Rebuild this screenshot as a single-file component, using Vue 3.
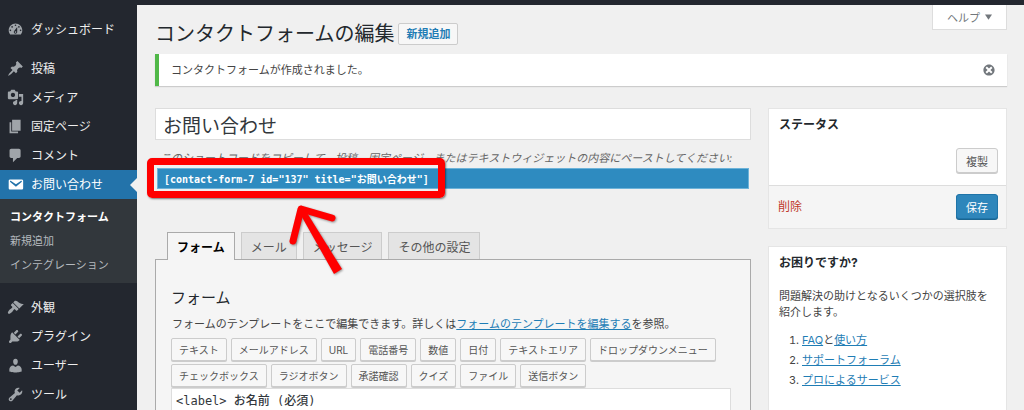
<script setup>
import { ref } from 'vue'

const icons = {
  dashboard: 'M3.76 16h12.48c1.1-1.37 1.76-3.11 1.76-5 0-4.42-3.58-8-8-8s-8 3.58-8 8c0 1.89.66 3.63 1.76 5zM10 4c.55 0 1 .45 1 1s-.45 1-1 1-1-.45-1-1 .45-1 1-1zM6 6c.55 0 1 .45 1 1s-.45 1-1 1-1-.45-1-1 .45-1 1-1zm8 0c.55 0 1 .45 1 1s-.45 1-1 1-1-.45-1-1 .45-1 1-1zm-5.37 5.55L12 7v6c0 1.1-.9 2-2 2s-2-.9-2-2c0-.57.24-1.08.63-1.45zM4 10c.55 0 1 .45 1 1s-.45 1-1 1-1-.45-1-1 .45-1 1-1zm12 0c.55 0 1 .45 1 1s-.45 1-1 1-1-.45-1-1 .45-1 1-1zm-5 3c0-.55-.45-1-1-1s-1 .45-1 1 .45 1 1 1 1-.45 1-1z',
  pin: 'M10.44 3.02l1.82-1.82 6.36 6.35-1.83 1.82c-1.05-.68-2.48-.57-3.41.36l-.75.75c-.92.93-1.04 2.35-.35 3.41l-1.83 1.82-2.41-2.41-2.8 2.79c-.42.42-3.38 2.71-3.8 2.29s1.86-3.39 2.28-3.81l2.79-2.79L4.1 9.36l1.83-1.82c1.05.69 2.48.57 3.4-.36l.75-.75c.93-.92 1.05-2.35.36-3.41z',
  media: 'M13 11V4c0-.55-.45-1-1-1h-1.67L9 1H5L3.67 3H2c-.55 0-1 .45-1 1v7c0 .55.45 1 1 1h10c.55 0 1-.45 1-1zM7 4.5c1.38 0 2.5 1.12 2.5 2.5S8.38 9.5 7 9.5 4.5 8.38 4.5 7 5.62 4.5 7 4.5zM14 6h5v10.5c0 1.38-1.12 2.5-2.5 2.5S14 17.88 14 16.5s1.12-2.5 2.5-2.5c.17 0 .34.02.5.05V9h-3V6zm-4 8.05V13h2v3.5c0 1.38-1.12 2.5-2.5 2.5S7 17.88 7 16.5 8.12 14 9.5 14c.17 0 .34.02.5.05z',
  page: 'M6 15V2h10v13H6zm-1 1h8v2H3V5h2v11z',
  comment: 'M5 2h9c1.1 0 2 .9 2 2v7c0 1.1-.9 2-2 2h-2l-5 5v-5H5c-1.1 0-2-.9-2-2V4c0-1.1.9-2 2-2z',
  mail: 'M3.87 4h13.25C18.37 4 19 4.59 19 5.79v8.42c0 1.19-.63 1.79-1.88 1.79H3.87c-1.25 0-1.88-.6-1.88-1.79V5.79c0-1.2.63-1.79 1.88-1.79zm6.62 8.6l6.74-5.53c.24-.2.43-.66.13-1.07-.29-.41-.82-.42-1.17-.17l-5.7 3.86L4.8 5.83c-.35-.25-.88-.24-1.17.17-.3.41-.11.87.13 1.07z',
  brush: 'M14.48 11.06L7.41 3.99l1.5-1.5c.5-.56 2.3-.47 3.51.32 1.21.8 1.43 1.28 2.91 2.1 1.18.64 2.45 1.26 4.45.85zm-.71.71L6.7 4.7 4.93 6.47c-.39.39-.39 1.02 0 1.41l1.06 1.06c.39.39.39 1.03 0 1.42-.6.6-1.43 1.11-2.21 1.69-.35.26-.7.53-1.01.84C1.43 14.23.4 16.08 1.4 17.07c.99 1 2.84-.03 4.18-1.36.31-.31.58-.66.85-1.02.57-.78 1.08-1.61 1.69-2.21.39-.39 1.02-.39 1.41 0l1.06 1.06c.39.39 1.02.39 1.41 0z',
  plug: 'M13.11 4.36L9.87 7.6 8 5.73l3.24-3.24c.35-.34 1.05-.2 1.56.32.52.51.66 1.21.31 1.55zm-8 1.77l.91-1.12 9.01 9.01-1.19.84c-.71.71-2.63 1.16-3.82 1.16H6.14L4.9 17.26c-.59.59-1.54.59-2.12 0-.59-.58-.59-1.53 0-2.12l1.24-1.24v-3.88c0-1.13.4-3.19 1.09-3.89zm7.26 3.97l3.24-3.24c.34-.35 1.04-.21 1.55.31.52.51.66 1.21.31 1.55l-3.24 3.25z',
  user: 'M10 9.25c-2.27 0-2.73-3.44-2.73-3.44C7 4.02 7.82 2 9.97 2c2.16 0 2.98 2.02 2.71 3.81 0 0-.41 3.44-2.68 3.44zm0 2.57L12.72 10c2.39 0 4.52 2.33 4.52 4.53v2.49s-3.65 1.13-7.24 1.13c-3.65 0-7.24-1.13-7.24-1.13v-2.49c0-2.25 1.94-4.48 4.47-4.48z',
  wrench: 'M16.68 9.77c-1.34 1.34-3.3 1.67-4.95.99l-5.41 6.52c-.99.99-2.59.99-3.58 0s-.99-2.59 0-3.57l6.52-5.42c-.68-1.65-.35-3.61.99-4.95 1.28-1.28 3.12-1.62 4.72-1.06l-2.89 2.89 2.82 2.82 2.86-2.87c.53 1.58.18 3.39-1.08 4.65zM3.81 16.21c.4.39 1.04.39 1.43 0 .4-.4.4-1.04 0-1.43-.39-.4-1.03-.4-1.43 0-.39.39-.39 1.03 0 1.43z',
}

const menu = [
  [{ label: 'ダッシュボード', icon: 'dashboard' }],
  [
    { label: '投稿', icon: 'pin' },
    { label: 'メディア', icon: 'media' },
    { label: '固定ページ', icon: 'page' },
    { label: 'コメント', icon: 'comment' },
    {
      label: 'お問い合わせ',
      icon: 'mail',
      current: true,
      children: ['コンタクトフォーム', '新規追加', 'インテグレーション'],
    },
  ],
  [
    { label: '外観', icon: 'brush' },
    { label: 'プラグイン', icon: 'plug' },
    { label: 'ユーザー', icon: 'user' },
    { label: 'ツール', icon: 'wrench' },
  ],
]

const tabs = ['フォーム', 'メール', 'メッセージ', 'その他の設定']
const activeTab = ref('フォーム')

const tagRows = [
  ['テキスト', 'メールアドレス', 'URL', '電話番号', '数値', '日付', 'テキストエリア', 'ドロップダウンメニュー'],
  ['チェックボックス', 'ラジオボタン', '承諾確認', 'クイズ', 'ファイル', '送信ボタン'],
]

const title = ref('お問い合わせ')
const shortcode = '[contact-form-7 id="137" title="お問い合わせ"]'
const template = ref('<label> お名前 (必須)\n    [text* your-name] </label>')
const noticeVisible = ref(true)
</script>

<template>
  <div class="admin">
    <div class="topbar"></div>
    <div class="body">
      <nav class="sidebar">
        <ul v-for="(group, g) in menu" :key="g" class="group">
          <li v-for="item in group" :key="item.label">
            <a href="#" class="item" :class="{ current: item.current }">
              <svg class="icon" viewBox="0 0 20 20" aria-hidden="true"><path :d="icons[item.icon]" /></svg>
              <span>{{ item.label }}</span>
            </a>
            <ul v-if="item.children" class="submenu">
              <li v-for="(child, c) in item.children" :key="child">
                <a href="#" :class="{ selected: c === 0 }">{{ child }}</a>
              </li>
            </ul>
          </li>
        </ul>
      </nav>

      <main class="content">
        <header class="head">
          <div class="heading">
            <h1>コンタクトフォームの編集</h1>
            <a href="#" class="add-new">新規追加</a>
          </div>
          <button type="button" class="help">
            ヘルプ
            <svg viewBox="0 0 8 6" aria-hidden="true"><path d="M0 0h8L4 6z" /></svg>
          </button>
        </header>

        <div v-if="noticeVisible" class="notice">
          <p>コンタクトフォームが作成されました。</p>
          <button type="button" class="dismiss" aria-label="通知を非表示" @click="noticeVisible = false">
            <svg viewBox="0 0 20 20" aria-hidden="true">
              <path d="M10 2c4.42 0 8 3.58 8 8s-3.58 8-8 8-8-3.58-8-8 3.58-8 8-8zm5 11l-3-3 3-3-2-2-3 3-3-3-2 2 3 3-3 3 2 2 3-3 3 3z" />
            </svg>
          </button>
        </div>

        <div class="columns">
          <section class="editor">
            <input v-model="title" class="title" type="text" aria-label="タイトル" />

            <div class="shortcode">
              <label for="shortcode">このショートコードをコピーして、投稿、固定ページ、またはテキストウィジェットの内容にペーストしてください:</label>
              <div class="code-wrap">
                <input id="shortcode" class="code" type="text" readonly :value="shortcode" />
                <span class="marker"></span>
                <svg class="arrow" viewBox="0 0 60 74" aria-hidden="true">
                  <path class="arms" d="M7 39L15 7l31 9" />
                  <path class="shaft" d="M12 8l6-2 38 61-8 5z" />
                </svg>
              </div>
            </div>

            <div class="tabs" role="tablist">
              <button
                v-for="tab in tabs"
                :key="tab"
                type="button"
                role="tab"
                :aria-selected="tab === activeTab"
                class="tab"
                :class="{ active: tab === activeTab }"
                @click="activeTab = tab"
              >{{ tab }}</button>
            </div>

            <div class="panel">
              <h2>フォーム</h2>
              <p class="lead">フォームのテンプレートをここで編集できます。詳しくは<a href="#">フォームのテンプレートを編集する</a>を参照。</p>
              <div class="tags">
                <div v-for="(row, r) in tagRows" :key="r" class="tag-row">
                  <button v-for="tag in row" :key="tag" type="button" class="tag">{{ tag }}</button>
                </div>
              </div>
              <textarea v-model="template" class="template" rows="12" aria-label="フォーム"></textarea>
            </div>
          </section>

          <aside class="side">
            <section class="box">
              <h3>ステータス</h3>
              <div class="duplicate">
                <button type="button" class="btn">複製</button>
              </div>
              <div class="actions">
                <a href="#" class="delete">削除</a>
                <button type="button" class="btn primary">保存</button>
              </div>
            </section>

            <section class="box">
              <h3>お困りですか?</h3>
              <div class="support">
                <p>問題解決の助けとなるいくつかの選択肢を紹介します。</p>
                <ol>
                  <li><a href="#">FAQ</a>と<a href="#">使い方</a></li>
                  <li><a href="#">サポートフォーラム</a></li>
                  <li><a href="#">プロによるサービス</a></li>
                </ol>
              </div>
            </section>
          </aside>
        </div>
      </main>
    </div>
  </div>
</template>

<style>
body {
  overflow: hidden;
  background: #f0f0f0;
}
</style>

<style scoped>
* {
  box-sizing: border-box;
}

.admin {
  display: flex;
  flex-direction: column;
  height: 100vh;
  overflow: hidden;
  color: #444;
  background: #f0f0f0;
  font-family: Inter, "Noto Sans CJK JP", sans-serif;
  font-size: 11px;
  line-height: 16px;
}

h1, h2, h3, p, ul, ol {
  margin: 0;
  padding: 0;
}

ul {
  list-style: none;
}

button, input, textarea {
  margin: 0;
  font-family: inherit;
}

button {
  cursor: pointer;
}

a {
  color: #1f7db5;
}

.topbar {
  flex: none;
  height: 5px;
  background: #23272f;
}

.body {
  display: flex;
  flex: 1;
  min-height: 0;
}

/* Sidebar */
.sidebar {
  flex: none;
  width: 137px;
  padding-top: 10px;
  background: #23272f;
}

.group {
  margin-bottom: 10px;
}

.item {
  position: relative;
  display: flex;
  align-items: center;
  gap: 7px;
  height: 29px;
  padding-left: 7px;
  color: #eee;
  font-size: 12px;
  text-decoration: none;
}

.icon {
  width: 17px;
  height: 17px;
  fill: #a0a5aa;
}

.current {
  color: #fff;
  background: #2373aa;
}

.current .icon {
  fill: #fff;
}

.current::after {
  position: absolute;
  top: 8px;
  right: 0;
  border: 7px solid transparent;
  border-right-color: #f0f0f0;
  border-left-width: 0;
  content: "";
}

.submenu {
  padding: 6px 0;
  background: #32373c;
}

.submenu a {
  display: block;
  padding-left: 10px;
  color: #b4b9be;
  line-height: 24px;
  text-decoration: none;
}

.submenu .selected {
  color: #fff;
  font-weight: 700;
}

/* Page header */
.content {
  flex: 1;
  min-width: 0;
  padding: 0 17px 0 18px;
}

.head {
  display: flex;
  align-items: flex-start;
  justify-content: space-between;
  height: 49px;
}

.heading {
  display: flex;
  align-items: center;
  gap: 4px;
  padding-top: 14px;
}

h1 {
  color: #23282d;
  font-size: 20px;
  font-weight: 400;
  line-height: 30px;
}

.add-new {
  padding: 2px 7px;
  border: 1px solid #ccc;
  border-radius: 2px;
  background: #f7f7f7;
  font-weight: 700;
  text-decoration: none;
}

.help {
  display: flex;
  align-items: center;
  gap: 5px;
  height: 25px;
  padding: 0 14px;
  border: 1px solid #ddd;
  border-top: 0;
  color: #72777c;
  background: #fff;
  font-size: 11px;
}

.help svg {
  width: 7px;
  height: 6px;
  fill: #72777c;
}

.notice {
  display: flex;
  align-items: center;
  justify-content: space-between;
  height: 32px;
  padding: 0 11px 0 12px;
  border-left: 4px solid #50b848;
  background: #fff;
  box-shadow: 0 1px 1px rgba(0, 0, 0, 0.15);
}

.dismiss {
  padding: 0;
  border: 0;
  background: none;
}

.dismiss svg {
  display: block;
  width: 14px;
  height: 14px;
  fill: #72777c;
}

.columns {
  display: grid;
  grid-template-columns: minmax(0, 1fr) 239px;
  gap: 17px;
  margin-top: 22px;
}

/* Editor */
.title {
  display: block;
  width: 100%;
  height: 32px;
  padding: 0 7px;
  border: 1px solid #ddd;
  color: #32373c;
  background: #fff;
  font-size: 19px;
}

.shortcode {
  padding: 9px 2px 0;
}

.shortcode label {
  display: block;
  padding-left: 3px;
  overflow: hidden;
  color: #666;
  font-style: italic;
  line-height: 18px;
  white-space: nowrap;
}

.code-wrap {
  position: relative;
  margin-top: 1px;
}

.code {
  display: block;
  width: 100%;
  height: 21px;
  padding: 0 6px;
  border: 1px solid #6db3d9;
  color: #fff;
  background: #2e8bc0;
  font-family: "DejaVu Sans Mono", "Noto Sans CJK JP", monospace;
  font-size: 10px;
  font-weight: 700;
}

.marker {
  position: absolute;
  top: -10px;
  left: -10px;
  width: 298px;
  height: 40px;
  border: 7px solid #f00;
  border-radius: 5px;
  box-shadow: 1px 1px 2px rgba(0, 0, 0, 0.5);
  pointer-events: none;
}

.arrow {
  position: absolute;
  z-index: 1;
  top: 34px;
  left: 129px;
  width: 60px;
  height: 74px;
  filter: drop-shadow(1px 1px 1px rgba(0, 0, 0, 0.4));
  pointer-events: none;
}

.arms {
  fill: none;
  stroke: #f00;
  stroke-width: 7;
  stroke-linecap: round;
  stroke-linejoin: round;
}

.shaft {
  fill: #f00;
}

.tabs {
  display: flex;
  gap: 6px;
  margin-top: 43px;
  padding-left: 12px;
}

.tab {
  height: 27px;
  padding: 0 9px;
  border: 1px solid #ccc;
  border-bottom: 0;
  color: #555;
  background: #e4e4e4;
  font-size: 12px;
}

.tab.active {
  position: relative;
  height: 28px;
  margin-bottom: -1px;
  border-color: #aaa;
  color: #000;
  background: #f5f5f5;
  font-weight: 700;
}

.panel {
  padding: 26px 19px 0 15px;
  border: 1px solid #aaa;
  background: #f5f5f5;
}

h2 {
  color: #23282d;
  font-size: 15px;
  font-weight: 400;
  line-height: 24px;
}

.lead {
  margin-top: 6px;
  padding-left: 1px;
}

.tags {
  display: flex;
  flex-direction: column;
  gap: 3px;
  margin-top: 6px;
}

.tag-row {
  display: flex;
  gap: 4px;
}

.tag {
  height: 23px;
  padding: 0 7px;
  border: 1px solid #ccc;
  border-radius: 2px;
  color: #555;
  background: #f7f7f7;
  box-shadow: 0 1px 0 #ccc;
  font-size: 10px;
  white-space: nowrap;
}

.template {
  display: block;
  width: 100%;
  margin-top: 1px;
  padding: 4px;
  border: 1px solid #ddd;
  color: #32373c;
  background: #fff;
  font-family: "DejaVu Sans Mono", "Noto Sans CJK JP", monospace;
  font-size: 12px;
  font-weight: 500;
  line-height: 16px;
  resize: none;
}

/* Right column */
.side {
  display: flex;
  flex-direction: column;
  gap: 17px;
}

.box {
  border: 1px solid #e5e5e5;
  background: #fff;
}

h3 {
  padding: 6px 10px;
  color: #23282d;
  font-size: 12px;
  font-weight: 700;
  line-height: 20px;
}

.btn {
  height: 25px;
  padding: 0 9px;
  border: 1px solid #ccc;
  border-radius: 3px;
  color: #555;
  background: #f7f7f7;
  box-shadow: 0 1px 0 #ccc;
  font-size: 11px;
}

.primary {
  border-color: #1f74a8;
  color: #fff;
  background: #2e86bb;
  box-shadow: 0 1px 0 #1b6590;
}

.duplicate {
  display: flex;
  justify-content: flex-end;
  padding: 7px 8px 12px;
}

.actions {
  display: flex;
  align-items: center;
  justify-content: space-between;
  padding: 8px 8px 9px 9px;
  border-top: 1px solid #ddd;
  background: #f5f5f5;
}

.delete {
  color: #c0392b;
  font-size: 12px;
  text-decoration: none;
}

.support {
  padding: 9px 10px 20px;
}

ol {
  margin-top: 10px;
  padding-left: 23px;
}

ol li {
  line-height: 20px;
}
</style>
